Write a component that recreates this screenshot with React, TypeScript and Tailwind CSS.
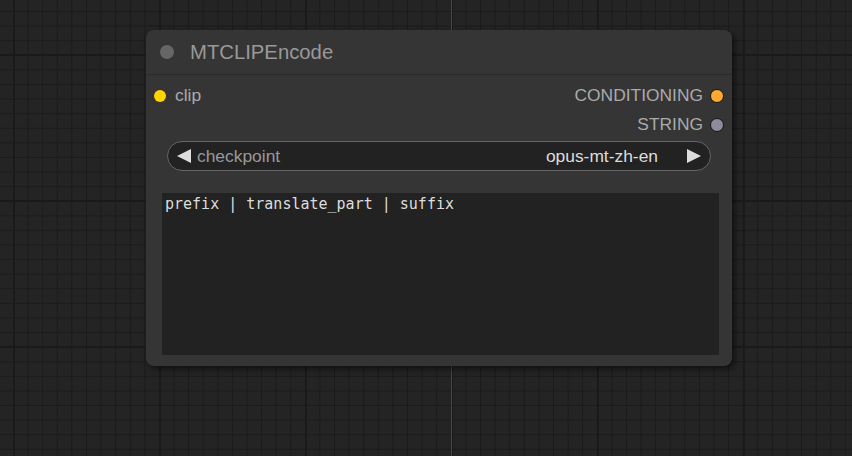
import React from "react";

// Slot row inside the node body (input on the left, output on the right).
function Slot({ label, color, side }: { label: string; color: string; side: "in" | "out" }) {
  const dot = (
    <span
      className={`block shrink-0 rounded-full ${side === "out" ? "h-[14px] w-[14px] border border-[#151515]" : "h-[12px] w-[12px]"}`}
      style={{ backgroundColor: color }}
    />
  );
  return side === "in" ? (
    <div className="flex h-[29px] items-center gap-[9px] pl-[8px]">
      {dot}
      <span className="text-[17.4px] text-[#aaa]">{label}</span>
    </div>
  ) : (
    <div className="flex h-[29px] items-center justify-end gap-[7px] pr-[8px]">
      <span className="text-[17.4px] text-[#aaa]">{label}</span>
      {dot}
    </div>
  );
}

export default function App() {
  return (
    <div
      className="relative h-[456px] w-[852px] overflow-hidden bg-[#242424] bg-[linear-gradient(to_right,#1a1a1a_2px,transparent_2px),linear-gradient(to_bottom,#1a1a1a_2px,transparent_2px),linear-gradient(to_right,#1b1b1b_1px,transparent_1px),linear-gradient(to_bottom,#1b1b1b_1px,transparent_1px)] bg-[size:146px_146px,146px_146px,14.6px_14.6px,14.6px_14.6px] bg-[position:13px_54px,13px_54px,13px_11px,13px_11px] font-['Liberation_Sans',Arial,sans-serif]"
    >
      {/* link wire behind the node */}
      <div className="absolute left-[451px] top-0 h-full w-px bg-[#2a4f7a]" />

      {/* node */}
      <div className="absolute left-[146px] top-[30px] flex h-[336px] w-[586px] flex-col rounded-[8px] bg-[#353535] shadow-[3px_3px_6px_rgba(0,0,0,0.55)]">
        <div className="flex h-[45px] items-center border-b border-[#2b2b2b] pl-[14px]">
          <span className="block h-[14px] w-[14px] rounded-full bg-[#666]" />
          <span className="ml-[16px] text-[20.3px] text-[#999]">MTCLIPEncode</span>
        </div>

        <div className="flex flex-1 flex-col pt-[6px]">
          <Slot label="clip" color="#ffd500" side="in" />
          <div className="-mt-[29px]">
            <Slot label="CONDITIONING" color="#ffa931" side="out" />
          </div>
          <Slot label="STRING" color="#8c8c9e" side="out" />

          {/* combo widget */}
          <div className="mx-[21px] mt-[2px] flex h-[30px] items-center rounded-full border border-[#666] bg-[#222] px-[9px]">
            <svg width="14" height="14" viewBox="0 0 14 14" className="shrink-0">
              <polygon points="0,7 14,0 14,14" fill="#ddd" />
            </svg>
            <span className="ml-[6px] text-[17.4px] text-[#999]">checkpoint</span>
            <span className="ml-auto mr-[29px] text-[17.4px] text-[#ddd]">opus-mt-zh-en</span>
            <svg width="14" height="14" viewBox="0 0 14 14" className="shrink-0">
              <polygon points="14,7 0,0 0,14" fill="#ddd" />
            </svg>
          </div>

          {/* text area */}
          <div className="mb-[11px] ml-[16px] mr-[13px] mt-[22px] flex-1 bg-[#222] px-[3px] py-[1px] font-['DejaVu_Sans_Mono',monospace] text-[15px] leading-[20px] text-[#ddd]">
            prefix | translate_part | suffix
          </div>
        </div>
      </div>
    </div>
  );
}
